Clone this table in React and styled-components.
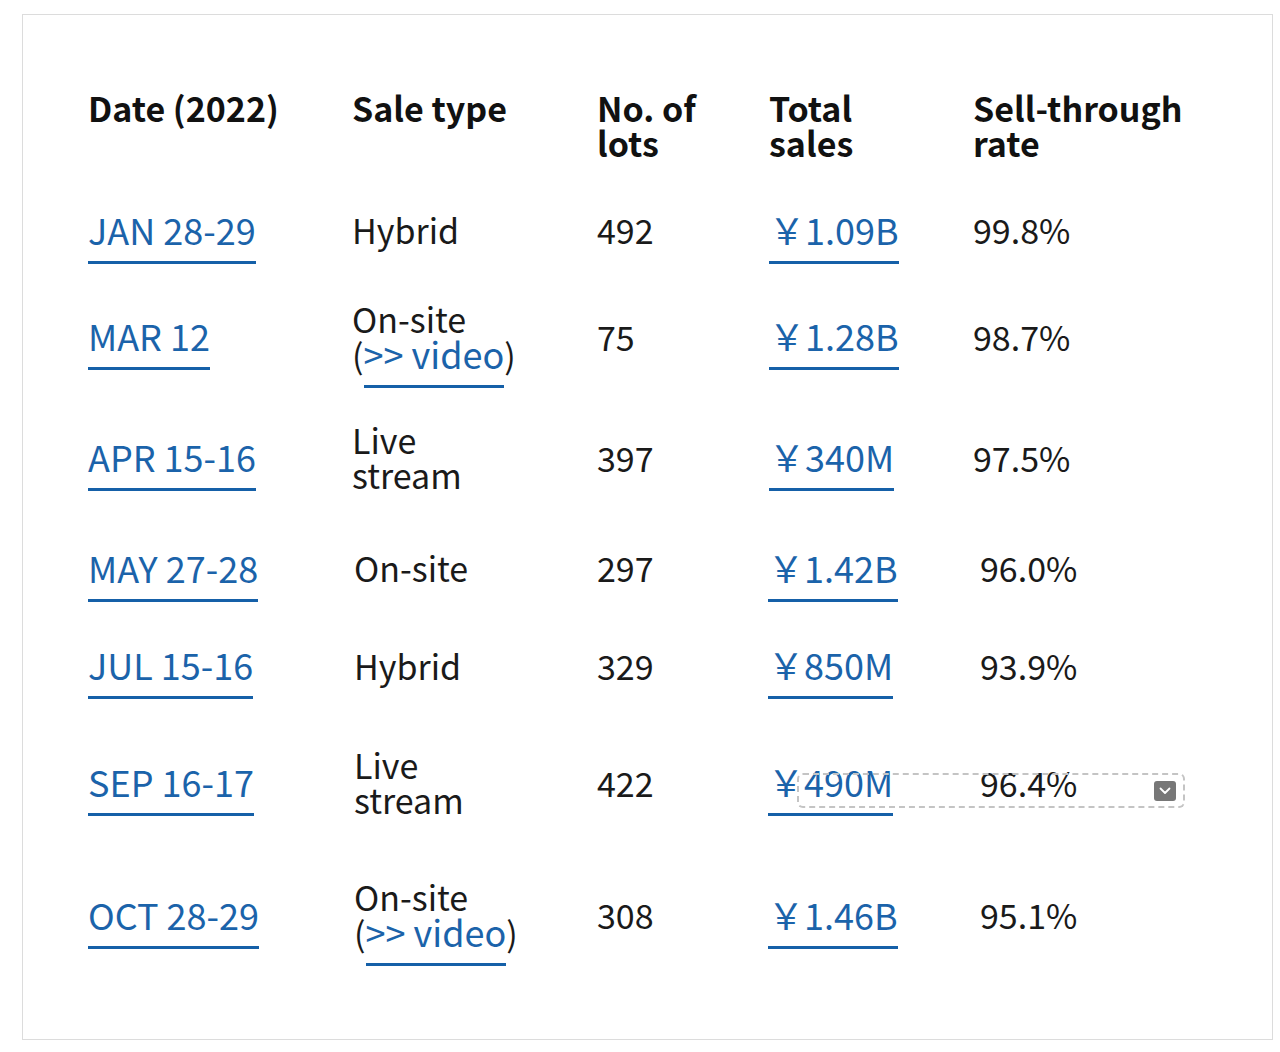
import React from "react";
import styled, { createGlobalStyle } from "styled-components";

const Global = createGlobalStyle`
  html, body { margin: 0; padding: 0; background: #fff; }
  body { font-family: "Noto Sans CJK JP", "Noto Sans", sans-serif; color: #111; }
`;

const Frame = styled.div`
  position: relative;
  box-sizing: border-box;
  width: 1251px;
  height: 1026px;
  margin: 14px 0 0 22px;
  border: 1px solid #dcdcdc;
  background: #fff;
  padding: 75px 0 0 65px;
`;

const Row = styled.div`
  display: grid;
  grid-template-columns: ${(p) => (p.$shift ? "266px 243px 171px 212px 1fr" : "264px 245px 172px 204px 1fr")};
  align-items: ${(p) => (p.$head ? "start" : "center")};
  height: ${(p) => p.$h}px;
`;

const Head = styled.div`
  font-size: 34px;
  font-weight: 700;
  line-height: 35px;
  color: #111;
  white-space: nowrap;
`;

const Cell = styled.div`
  font-size: 34px;
  line-height: 35px;
  color: #1a1a1a;
  white-space: nowrap;
`;

const Link = styled.a`
  font-size: 36px;
  color: #1b63aa;
  text-decoration: none;
  padding-bottom: 6px;
  border-bottom: 3px solid #1560a8;
`;

const Selection = styled.div`
  position: absolute;
  left: 774px;
  top: 758px;
  width: 388px;
  height: 35px;
  box-sizing: border-box;
  border: 2px dashed #c4c4c4;
  border-radius: 6px;
`;

const Toggle = styled.div`
  position: absolute;
  right: 7px;
  top: 6px;
  width: 22px;
  height: 20px;
  border-radius: 3px;
  background: #777;
  display: flex;
  align-items: center;
  justify-content: center;
`;

const rows = [
  { date: "JAN 28-29", type: "Hybrid", lots: "492", sales: "￥1.09B", rate: "99.8%", h: 106 },
  { date: "MAR 12", type: "video", lots: "75", sales: "￥1.28B", rate: "98.7%", h: 107.6 },
  { date: "APR 15-16", type: "live", lots: "397", sales: "￥340M", rate: "97.5%", h: 133.9 },
  { date: "MAY 27-28", type: "On-site", lots: "297", sales: "￥1.42B", rate: "96.0%", h: 87.85, shift: true },
  { date: "JUL 15-16", type: "Hybrid", lots: "329", sales: "￥850M", rate: "93.9%", h: 107.15, shift: true },
  { date: "SEP 16-17", type: "live", lots: "422", sales: "￥490M", rate: "96.4%", h: 127, shift: true },
  { date: "OCT 28-29", type: "video", lots: "308", sales: "￥1.46B", rate: "95.1%", h: 137.2, shift: true },
];

function SaleType({ type }) {
  if (type === "video")
    return (
      <Cell>
        On-site
        <br />(<Link href="#">&gt;&gt; video</Link>)
      </Cell>
    );
  if (type === "live")
    return (
      <Cell>
        Live
        <br />
        stream
      </Cell>
    );
  return <Cell>{type}</Cell>;
}

export default function App() {
  return (
    <>
      <Global />
      <Frame>
        <Row $head $h={86.5}>
          <Head>Date (2022)</Head>
          <Head>Sale type</Head>
          <Head>
            No. of
            <br />
            lots
          </Head>
          <Head>
            Total
            <br />
            sales
          </Head>
          <Head>
            Sell-through
            <br />
            rate
          </Head>
        </Row>
        {rows.map((r) => (
          <Row key={r.date} $h={r.h} $shift={r.shift}>
            <Cell>
              <Link href="#">{r.date}</Link>
            </Cell>
            <SaleType type={r.type} />
            <Cell>{r.lots}</Cell>
            <Cell>
              <Link href="#">{r.sales}</Link>
            </Cell>
            <Cell>{r.rate}</Cell>
          </Row>
        ))}
        <Selection>
          <Toggle>
            <svg width="12" height="8" viewBox="0 0 12 8">
              <path d="M1.5 1.5 L6 6 L10.5 1.5" fill="none" stroke="#fff" strokeWidth="1.8" strokeLinecap="round" strokeLinejoin="round" />
            </svg>
          </Toggle>
        </Selection>
      </Frame>
    </>
  );
}
